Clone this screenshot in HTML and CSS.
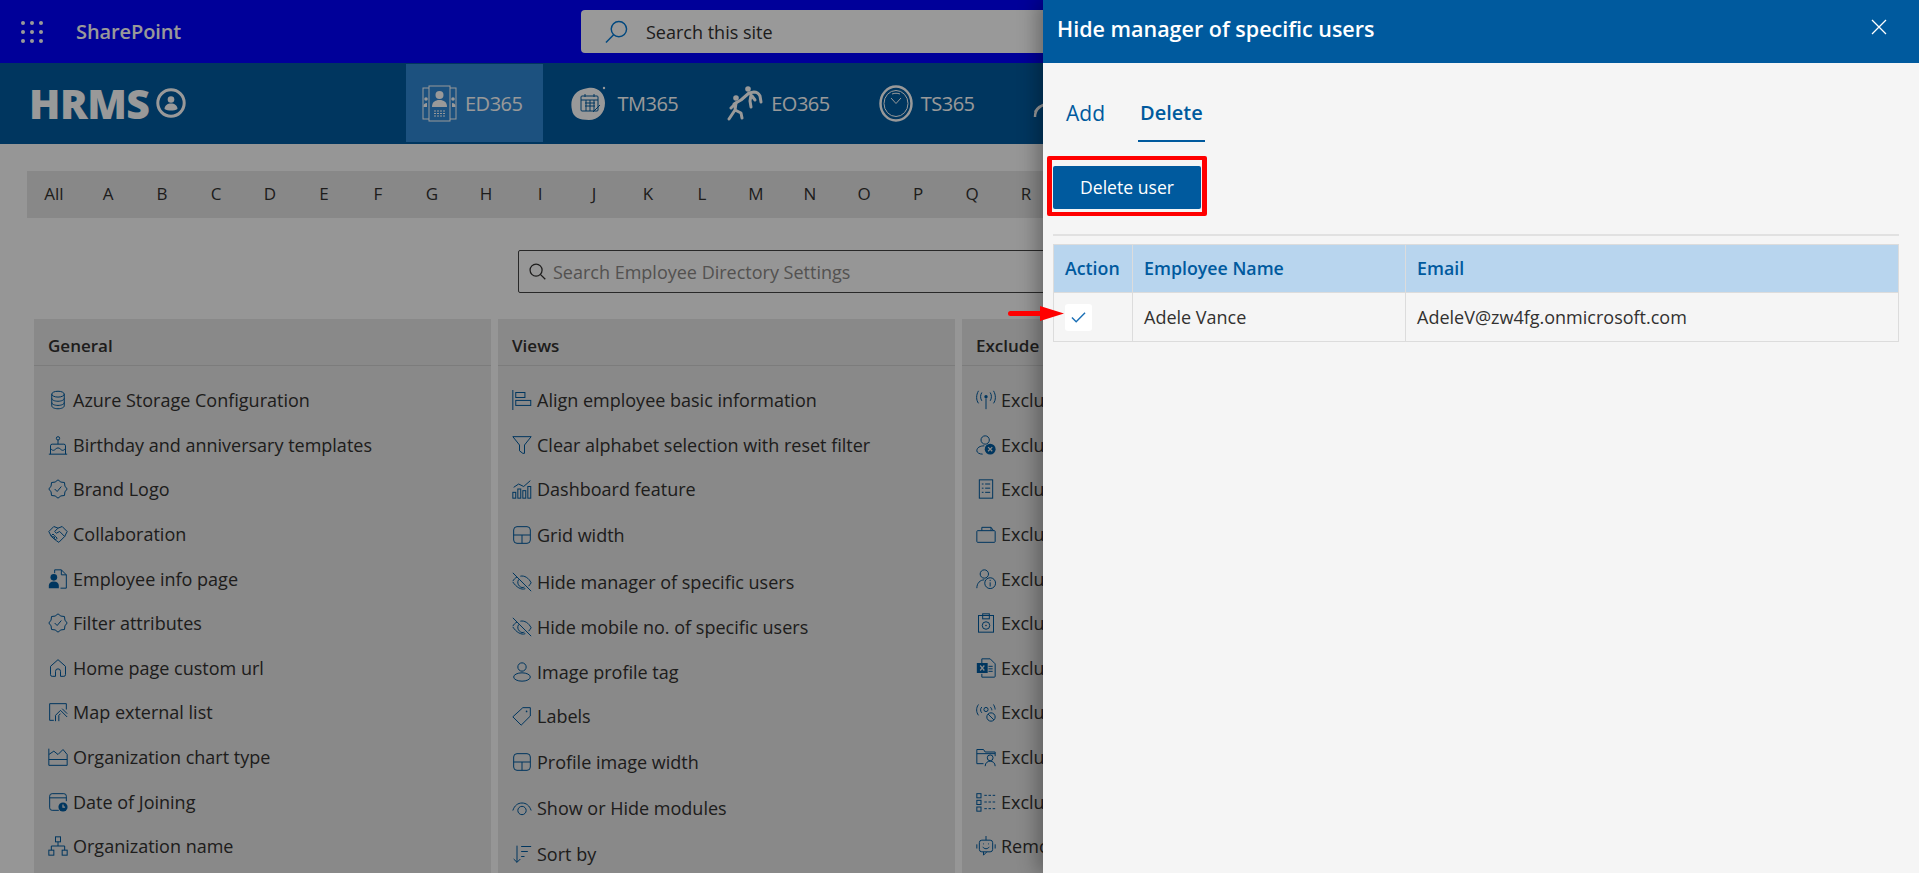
FILE: index.html
```html
<!DOCTYPE html>
<html lang="en">
  <head>
    <meta charset="UTF-8" />
    <title>Hide manager of specific users</title>
    <link rel="stylesheet" href="styles.css">
  </head>

  <body>
    <!-- icon sheet -->
    <svg class="sprite" aria-hidden="true">
      <symbol id="i-db" viewBox="0 0 24 24"><ellipse cx="12" cy="5" rx="7.5" ry="3.5"/><path d="M4.5 5v14c0 2 3.4 3.5 7.5 3.5s7.500-1.500 7.500-3.500V5M4.500 10c0 2 3.400 3.500 7.500 3.500s7.500-1.500 7.500-3.500M4.500 15c0 2 3.400 3.500 7.500 3.500s7.500-1.500 7.500-3.500"/></symbol>
      <symbol id="i-cake" viewBox="0 0 24 24"><circle cx="12" cy="4" r="2"/><path d="M12 6v5M1 23h22M3 23V13a2 2 0 012-2h14a2 2 0 012 2v10M3 16c2 3 4 3 6 1s4-2 6 0 4 2 6-1"/></symbol>
      <symbol id="i-badge" viewBox="0 0 24 24"><path d="M12 1l3.440 2.690 4.340.530.530 4.340L23 12l-2.690 3.440-.530 4.340-4.340.530L12 23l-3.440-2.690-4.340-.530-.530-4.340L1 12l2.690-3.440.530-4.340 4.340-.530zM8 12l3 3 5-6"/></symbol>
      <symbol id="i-shake" viewBox="0 0 24 24"><path d="M1 9l6-6 5 2 5-2 6 6-3 6-7 7-3-2-6-5zM12 5L8 9l2 2 4-2 6 6M4 14l2-2 2 2-2 2zM7 17l2-2 2 2-2 2z"/></symbol>
      <symbol id="i-docuser" viewBox="0 0 24 24"><path d="M8 5V1h8l6 6v16h-7M16 1v6h6"/><circle class="fill" cx="7" cy="10" r="4"/><path class="fill" d="M1 23v-3c0-3 2-5 6-5s6 2 6 5v3z"/></symbol>
      <symbol id="i-home" viewBox="0 0 24 24"><path d="M12 2L3 10v10a2 2 0 002 2h4v-6a3 3 0 016 0v6h4a2 2 0 002-2V10z"/></symbol>
      <symbol id="i-map" viewBox="0 0 24 24"><path d="M2 22V2h20v7M2 22h5M9 23v-7l6-6 8 8M13 23v-7l2-2M17 8l6 6"/></symbol>
      <symbol id="i-area" viewBox="0 0 24 24"><path d="M1 2v20h22M1 9l6-4 5 4 6-6 5 6v13M1 15h22"/></symbol>
      <symbol id="i-date" viewBox="0 0 24 24"><path d="M22 11V5a3 3 0 00-3-3H5a3 3 0 00-3 3v14a3 3 0 003 3h8M2 7h20"/><circle class="fill" cx="18" cy="18" r="5.500"/><path class="cut" d="M18 15v3h2.500"/></symbol>
      <symbol id="i-org" viewBox="0 0 24 24"><rect x="9" y="1" width="6" height="6"/><rect x="1" y="17" width="6" height="6"/><rect x="17" y="17" width="6" height="6"/><path d="M12 7v5M4 17v-5h16v5"/></symbol>
      <symbol id="i-align" viewBox="0 0 24 24"><path d="M1 0v24"/><rect x="4.500" y="3" width="11" height="6"/><rect x="4.500" y="12.500" width="18" height="6"/></symbol>
      <symbol id="i-funnel" viewBox="0 0 24 24"><path d="M1 2h22l-8 10v10h-2l-4-3v-7z"/></symbol>
      <symbol id="i-dash" viewBox="0 0 24 24"><rect x="1" y="16" width="3.500" height="7"/><rect x="7" y="12" width="3.500" height="11"/><rect x="13" y="14" width="3.500" height="9"/><rect x="19" y="9" width="3.500" height="14"/><path d="M2 10l6-4 6 3 8-7"/></symbol>
      <symbol id="i-layout" viewBox="0 0 24 24"><rect x="2" y="2" width="20" height="20" rx="4"/><path d="M2 12h20M12 12v10"/></symbol>
      <symbol id="i-eyeoff" viewBox="0 0 24 24"><path d="M1 1l22 22M1 11c1-2 3-4 5-5M10 5c5-1 10 2 13 8-1 1-2 3-3 4M16 20c-5 2-11-2-15-8M8 9c-2 3-1 6 1 8s4 2 6 1"/></symbol>
      <symbol id="i-user" viewBox="0 0 24 24"><circle cx="12" cy="6" r="5"/><ellipse cx="12" cy="18" rx="10" ry="5"/></symbol>
      <symbol id="i-tag" viewBox="0 0 24 24"><path d="M1 13L13 2h9v10L11 23z"/><circle class="fill" cx="17.500" cy="6.500" r="1"/></symbol>
      <symbol id="i-eye" viewBox="0 0 24 24"><path d="M1 15C3 9 7 6 12 6s9 3 11 9"/><circle cx="12" cy="15" r="5"/></symbol>
      <symbol id="i-sort" viewBox="0 0 24 24"><path d="M6 2v20M2 18l4 4 4-4M11 3h12M11 9h8M11 15h4"/></symbol>
      <symbol id="i-signal" viewBox="0 0 24 24"><circle class="fill" cx="12" cy="8" r="2"/><path d="M12 10v13M7 3c-2 3-2 7 0 10M17 3c2 3 2 7 0 10M3 1c-3 5-3 11 0 15M21 1c3 5 3 11 0 15"/></symbol>
      <symbol id="i-userx" viewBox="0 0 24 24"><circle cx="11" cy="6" r="5"/><path d="M1 19c0-4 4-6 9-6M1 19c0 2 3 4 7 4"/><circle class="fill" cx="17" cy="17" r="6.500"/><path class="cut" d="M14.500 14.500l5 5M19.500 14.500l-5 5"/></symbol>
      <symbol id="i-listdoc" viewBox="0 0 24 24"><rect x="4" y="1" width="16" height="22"/><path d="M7 6h2M11 6h6M7 11h2M11 11h6M7 16h2M11 16h6"/></symbol>
      <symbol id="i-case" viewBox="0 0 24 24"><rect x="1" y="8" width="22" height="14" rx="1"/><path d="M7 8V4h11v4M18 4l3 4"/></symbol>
      <symbol id="i-userinfo" viewBox="0 0 24 24"><circle cx="10" cy="6" r="5"/><path d="M1 23c0-6 4-10 9-10"/><circle cx="17" cy="17" r="6.500"/><path d="M17 16v5M17 13v1.500"/></symbol>
      <symbol id="i-safe" viewBox="0 0 24 24"><rect x="3" y="3" width="18" height="20"/><rect x="8" y="1" width="8" height="6"/><circle cx="12" cy="15" r="4.500"/><circle class="fill" cx="12" cy="15" r="1"/></symbol>
      <symbol id="i-excel" viewBox="0 0 24 24"><path d="M7 7V1h10l6 6v15a1 1 0 01-1 1H7v-4M15 10h5M15 13h5M15 16h5"/><rect class="fill" x="1" y="6" width="13" height="12"/><path class="cut" d="M5 9l5 6M10 9l-5 6"/></symbol>
      <symbol id="i-signoff" viewBox="0 0 24 24"><path d="M3 3c-3 4-3 9 0 13M7 6c-2 2-2 5 0 7M17 6c1 1 2 2 2 4M21 3c1 2 2 4 2 6"/><circle cx="12" cy="9" r="2.500"/><circle cx="18" cy="18" r="5"/><path d="M14.500 14.500l7 7"/></symbol>
      <symbol id="i-folderuser" viewBox="0 0 24 24"><path d="M1 20V3h8l2 3h12v5M1 8h22M1 20h8"/><circle cx="17" cy="13" r="3.500"/><path d="M11 23c0-4 3-6 6-6s6 2 6 6"/></symbol>
      <symbol id="i-check" viewBox="0 0 24 24"><rect x="1" y="2" width="5" height="5"/><rect x="1" y="10" width="5" height="5"/><rect x="1" y="18" width="5" height="5"/><path d="M10 4h13M10 12h13M10 20h13" stroke-dasharray="3 2"/></symbol>
      <symbol id="i-bot" viewBox="0 0 24 24"><path d="M12 0v5"/><rect x="4" y="5" width="16" height="14" rx="3"/><path d="M1 10v5M23 10v5M9 19v4l4-4M8 13c2 3 6 3 8 0M9 9v1M15 9v1"/></symbol>
    </svg>

    <!-- site -->
    <div class="page">
      <header class="suite-bar">
        <div class="waffle">
          <i></i><i></i><i></i><i></i><i></i><i></i><i></i><i></i><i></i>
        </div>
        <span class="suite-name">SharePoint</span>
        <div class="site-search">
          <svg class="site-search-icon" viewBox="0 0 24 24"><circle cx="14.500" cy="9.500" r="8"/><path d="M9 15.500L1 23.500"/></svg>
          <span>Search this site</span>
        </div>
      </header>

      <nav class="app-bar">
        <div class="logo">
          <span>HRMS</span>
          <svg class="logo-mark" viewBox="0 0 30 30"><circle cx="15" cy="15" r="13.200"/><circle class="solid" cx="15" cy="11.500" r="3.300"/><path class="solid" d="M8.500 21c0-3.500 3-5.500 6.500-5.500s6.500 2 6.500 5.500c-3.500 2-9.500 2-13 0z"/></svg>
        </div>

        <a class="app-tab app-tab-active">
          <svg class="app-icon" viewBox="0 0 35 37">
            <rect x="1" y="3" width="33" height="31"/>
            <rect class="on-tab" x="7" y="1" width="21" height="35"/>
            <circle class="solid" cx="17.500" cy="10" r="4"/>
            <path class="solid" d="M10 22c0-5 3-7 7.500-7s7.500 2 7.500 7z"/>
            <path d="M12 26h11M12 28.500h11M12 31h11" stroke-dasharray="2 1"/>
            <circle class="solid" cx="4" cy="14" r="1.800"/>
            <circle class="solid" cx="31" cy="14" r="1.800"/>
            <path class="solid" d="M1.500 22c0-3 1-4 3.500-4v4zM33.500 22c0-3-1-4-3.500-4v4z"/>
          </svg>
          <span>ED365</span>
        </a>
        <a class="app-tab">
          <svg class="app-icon" viewBox="0 0 38 37">
            <path class="solid" d="M17 3c9-2 17 5 17 15s-7 17-16 17C8 35 2 32 1 25-1 17 1 5 17 3z"/>
            <circle class="solid" cx="33" cy="3" r="1.200"/>
            <rect class="on-blob" x="10" y="11" width="17" height="15" rx="1"/>
            <path class="on-blob" d="M10 15h17M14 18h10M14 21h10M15 15v11M19 15v11M23 15v11M14 9v3M23 9v3M22 27l7-7"/>
          </svg>
          <span>TM365</span>
        </a>
        <a class="app-tab">
          <svg class="app-icon" viewBox="0 0 36 37">
            <circle class="solid" cx="21" cy="4" r="2.800"/>
            <circle class="solid" cx="9" cy="13" r="2.800"/>
            <path class="thick" d="M7 19l7-4 8-7 5-1c3 0 5 2 6 4l1 6M24 10l-1 6 1 6M25 11l3 4"/>
            <path class="thick" d="M9 18l-1 7-6 9M8 25l6 3 1 5M8 19l-4 4"/>
          </svg>
          <span>EO365</span>
        </a>
        <a class="app-tab">
          <svg class="app-icon" viewBox="0 0 34 37">
            <ellipse class="bold" cx="17" cy="18.500" rx="15.500" ry="17"/>
            <ellipse cx="17" cy="18.500" rx="12" ry="13"/>
            <path d="M12 13l5 5.500 5-5.500M13 9c3-1 5-1 8 0"/>
          </svg>
          <span>TS365</span>
        </a>
        <a class="app-tab">
          <svg class="app-icon" viewBox="0 0 34 37">
            <path class="bold" d="M11 32c0-7 5-12 14-14M11 27c2-4 6-7 14-9"/>
          </svg>
        </a>
      </nav>

      <main class="content">
        <div class="alpha-bar">
          <span>All</span><span>A</span><span>B</span><span>C</span><span>D</span><span>E</span><span>F</span><span>G</span><span>H</span><span>I</span><span>J</span><span>K</span><span>L</span><span>M</span><span>N</span><span>O</span><span>P</span><span>Q</span><span>R</span>
        </div>

        <div class="settings-search">
          <svg class="settings-search-icon" viewBox="0 0 24 24"><circle cx="10" cy="10" r="8.500"/><path d="M16 16l7 7"/></svg>
          <span>Search Employee Directory Settings</span>
        </div>

        <div class="cards">
          <section class="card">
            <h3 class="card-title">General</h3>
            <ul class="card-list">
              <li><svg class="ico"><use href="#i-db"/></svg>Azure Storage Configuration</li>
              <li><svg class="ico"><use href="#i-cake"/></svg>Birthday and anniversary templates</li>
              <li><svg class="ico"><use href="#i-badge"/></svg>Brand Logo</li>
              <li><svg class="ico"><use href="#i-shake"/></svg>Collaboration</li>
              <li><svg class="ico"><use href="#i-docuser"/></svg>Employee info page</li>
              <li><svg class="ico"><use href="#i-badge"/></svg>Filter attributes</li>
              <li><svg class="ico"><use href="#i-home"/></svg>Home page custom url</li>
              <li><svg class="ico"><use href="#i-map"/></svg>Map external list</li>
              <li><svg class="ico"><use href="#i-area"/></svg>Organization chart type</li>
              <li><svg class="ico"><use href="#i-date"/></svg>Date of Joining</li>
              <li><svg class="ico"><use href="#i-org"/></svg>Organization name</li>
            </ul>
          </section>

          <section class="card">
            <h3 class="card-title">Views</h3>
            <ul class="card-list">
              <li><svg class="ico"><use href="#i-align"/></svg>Align employee basic information</li>
              <li><svg class="ico"><use href="#i-funnel"/></svg>Clear alphabet selection with reset filter</li>
              <li><svg class="ico"><use href="#i-dash"/></svg>Dashboard feature</li>
              <li class="tall"><svg class="ico"><use href="#i-layout"/></svg>Grid width</li>
              <li class="tall"><svg class="ico"><use href="#i-eyeoff"/></svg>Hide manager of specific users</li>
              <li><svg class="ico"><use href="#i-eyeoff"/></svg>Hide mobile no. of specific users</li>
              <li><svg class="ico"><use href="#i-user"/></svg>Image profile tag</li>
              <li><svg class="ico"><use href="#i-tag"/></svg>Labels</li>
              <li class="tall"><svg class="ico"><use href="#i-layout"/></svg>Profile image width</li>
              <li class="tall"><svg class="ico"><use href="#i-eye"/></svg>Show or Hide modules</li>
              <li><svg class="ico"><use href="#i-sort"/></svg>Sort by</li>
            </ul>
          </section>

          <section class="card">
            <h3 class="card-title">Exclude</h3>
            <ul class="card-list">
              <li><svg class="ico"><use href="#i-signal"/></svg>Exclude</li>
              <li><svg class="ico"><use href="#i-userx"/></svg>Exclude</li>
              <li><svg class="ico"><use href="#i-listdoc"/></svg>Exclude</li>
              <li><svg class="ico"><use href="#i-case"/></svg>Exclude</li>
              <li><svg class="ico"><use href="#i-userinfo"/></svg>Exclude</li>
              <li><svg class="ico"><use href="#i-safe"/></svg>Exclude</li>
              <li><svg class="ico"><use href="#i-excel"/></svg>Exclude</li>
              <li><svg class="ico"><use href="#i-signoff"/></svg>Exclude</li>
              <li><svg class="ico"><use href="#i-folderuser"/></svg>Exclude</li>
              <li><svg class="ico"><use href="#i-check"/></svg>Exclude</li>
              <li><svg class="ico"><use href="#i-bot"/></svg>Remove</li>
            </ul>
          </section>
        </div>
      </main>
    </div>

    <!-- dim layer and side panel -->
    <div class="dim"></div>

    <aside class="panel">
      <div class="panel-head">
        <h2 class="panel-title">Hide manager of specific users</h2>
        <svg class="panel-close" viewBox="0 0 16 16"><path d="M1 1l14 14M15 1L1 15"/></svg>
      </div>

      <div class="panel-body">
        <div class="tabs">
          <span class="tab tab-add">Add</span>
          <span class="tab tab-active">Delete</span>
        </div>

        <div class="red-box">
          <button class="delete-btn">Delete user</button>
        </div>

        <hr class="rule" />

        <table class="users">
          <thead>
            <tr>
              <th class="col-action">Action</th>
              <th class="col-name">Employee Name</th>
              <th>Email</th>
            </tr>
          </thead>
          <tbody>
            <tr>
              <td>
                <span class="tick">
                  <svg viewBox="0 0 16 16"><path d="M1 8l4.500 4.500L15 3"/></svg>
                </span>
              </td>
              <td>Adele Vance</td>
              <td>AdeleV@zw4fg.onmicrosoft.com</td>
            </tr>
          </tbody>
        </table>
      </div>
    </aside>

    <!-- callout arrow -->
    <svg class="red-arrow" viewBox="0 0 56 15"><path d="M2.500 5H32V0l24 7.500L32 15v-5H2.500a2.500 2.500 0 010-5z"/></svg>
  </body>
</html>
```

FILE: styles.css
```css
* {
  box-sizing: border-box;
}

html,
body {
  margin: 0;
  height: 100%;
  overflow: hidden;
}

body {
  position: relative;
  font-family: "Open Sans", "Noto Sans", sans-serif;
  font-size: 18px;
  color: #323130;
  background-color: #fafafa;
}

.sprite {
  position: absolute;
  width: 0;
  height: 0;
}

/* top blue bar */
.suite-bar {
  display: flex;
  align-items: center;
  height: 63px;
  padding-left: 21px;
  background-color: #0000ff;
}

.waffle {
  display: grid;
  grid-template-columns: repeat(3, 4px);
  gap: 5px;
  margin-right: 33px;
}

.waffle i {
  width: 4px;
  height: 4px;
  border-radius: 50%;
  background-color: #fff;
}

.suite-name {
  width: 505px;
  font-size: 20px;
  font-weight: 600;
  letter-spacing: -0.1px;
  color: #fff;
}

.site-search {
  display: flex;
  align-items: center;
  gap: 18px;
  width: 757px;
  height: 43px;
  padding-left: 24px;
  border-radius: 4px;
  font-size: 18px;
  background-color: #fff;
}

.site-search-icon {
  width: 23px;
  height: 23px;
  fill: none;
  stroke: #0078d4;
  stroke-width: 1.5;
}

/* app nav */
.app-bar {
  display: flex;
  align-items: stretch;
  height: 81px;
  padding: 1px 0 2px;
  color: #fff;
  background-color: #005a9e;
}

.logo {
  display: flex;
  align-items: center;
  gap: 7px;
  width: 406px;
  padding-left: 29px;
  font-size: 41px;
  font-weight: 800;
  letter-spacing: -0.5px;
}

.logo-mark {
  width: 30px;
  height: 30px;
  fill: none;
  stroke: #fff;
  stroke-width: 3;
}

.logo-mark .solid {
  fill: #fff;
  stroke: none;
}

.app-tab {
  display: flex;
  align-items: center;
  gap: 8px;
  margin-right: 12px;
  padding: 0 21px 0 16px;
  font-size: 20px;
  letter-spacing: -0.5px;
}

.app-tab-active {
  background-color: #2f88d4;
}

.app-icon {
  height: 37px;
  width: auto;
  max-width: 38px;
  fill: none;
  stroke: #fff;
  stroke-width: 1;
}

.app-icon .solid {
  fill: #fff;
  stroke: none;
}

.app-icon .on-tab {
  fill: #2f88d4;
}

.app-icon .on-blob {
  stroke: #005a9e;
}

.app-icon .thick {
  stroke-width: 3;
  stroke-linecap: round;
  stroke-linejoin: round;
}

.app-icon .bold {
  stroke-width: 2.500;
}

/* page content */
.content {
  padding: 27px 0 0 27px;
}

.alpha-bar {
  display: flex;
  height: 47px;
  align-items: center;
  width: 1860px;
  padding-bottom: 2px;
  background-color: #e3e3e3;
}

.alpha-bar span {
  width: 54px;
  text-align: center;
  font-size: 17px;
}

.settings-search {
  display: flex;
  align-items: center;
  gap: 7px;
  width: 883px;
  height: 43px;
  margin: 32px 0 0 491px;
  padding-left: 10px;
  border: 1.500px solid #444;
  border-radius: 2px;
  font-size: 18px;
  color: #8a8886;
  background-color: #fafafa;
}

.settings-search-icon {
  width: 17px;
  height: 17px;
  fill: none;
  stroke: #323130;
  stroke-width: 1.800;
}

.cards {
  display: flex;
  gap: 7px;
  margin: 26px 0 0 7px;
}

.card {
  width: 457px;
  height: 560px;
  background-color: #e4e4e4;
}

.card-title {
  margin: 0;
  height: 47px;
  padding: 14px 0 0 14px;
  font-size: 17px;
  font-weight: 600;
  line-height: 26px;
  border-bottom: 1px solid #cfcfcf;
}

.card-list {
  margin: 0;
  padding: 12px 0 0 14px;
  list-style: none;
}

.card-list li {
  display: flex;
  align-items: center;
  gap: 5px;
  height: 44.600px;
}

.card-list li.tall {
  height: 46.500px;
}

.ico {
  flex: none;
  width: 20px;
  height: 20px;
  fill: none;
  stroke: #005a9e;
  stroke-width: 1.200;
}

.ico .fill,
.fill {
  fill: #005a9e;
  stroke: none;
}

.cut {
  fill: none;
  stroke: #e4e4e4;
  stroke-width: 1.500;
}

/* overlay */
.dim {
  position: absolute;
  inset: 0;
  background-color: rgba(0, 0, 0, 0.4);
}

/* right panel */
.panel {
  position: absolute;
  top: 0;
  right: 0;
  bottom: 0;
  width: 876px;
  background-color: #f5f5f5;
  box-shadow: -6px 0 18px rgba(0, 0, 0, 0.3);
}

.panel-head {
  display: flex;
  align-items: center;
  justify-content: space-between;
  height: 63px;
  padding: 0 32px 7px 14px;
  background-color: #005a9e;
}

.panel-title {
  margin: 0;
  font-size: 21.500px;
  font-weight: 600;
  color: #fff;
}

.panel-close {
  width: 16px;
  height: 16px;
  margin-bottom: 3px;
  fill: none;
  stroke: #fff;
  stroke-width: 1.300;
}

.panel-body {
  padding: 28px 20px 0 10px;
}

.tabs {
  display: flex;
  gap: 31px;
  padding-left: 11px;
  height: 51px;
}

.tab {
  height: 51px;
  padding: 8px 2px 0;
  font-size: 20px;
  color: #005a9e;
}

.tab-add {
  font-size: 21px;
}

.tab-active {
  font-weight: 600;
  border-bottom: 2px solid #005a9e;
}

.red-box {
  width: 160px;
  height: 60px;
  margin: 14px 0 0 -6px;
  padding: 6px 1px 0;
  border-style: solid;
  border-color: #ff0000;
  border-width: 4px 5px;
  border-radius: 2px;
}

.delete-btn {
  display: block;
  width: 148px;
  height: 43px;
  padding: 0 0 2px;
  border: 0;
  border-radius: 2px;
  font-family: inherit;
  font-size: 17.600px;
  color: #fff;
  background-color: #005a9e;
}

.rule {
  height: 2px;
  margin: 18px 0 8px;
  border: 0;
  background-color: #e1e1e1;
}

.users {
  width: 100%;
  table-layout: fixed;
  border-collapse: collapse;
}

.users th,
.users td {
  padding: 0 11px;
  text-align: left;
  border: 1px solid #dcdcdc;
}

.users th {
  height: 48px;
  padding-bottom: 2px;
  font-size: 17.800px;
  font-weight: 600;
  color: #005a9e;
  background-color: #b8d5ee;
}

.users td {
  height: 49px;
}

.col-action {
  width: 79px;
}

.col-name {
  width: 273px;
}

.tick {
  display: flex;
  align-items: center;
  justify-content: center;
  width: 27px;
  height: 27px;
  border-radius: 3px;
  background-color: #fff;
}

.tick svg {
  width: 15px;
  height: 15px;
  fill: none;
  stroke: #1a6fb5;
  stroke-width: 1.500;
}

.red-arrow {
  position: absolute;
  left: 1008px;
  top: 306px;
  width: 56px;
  height: 15px;
  fill: #ff0000;
}
```
